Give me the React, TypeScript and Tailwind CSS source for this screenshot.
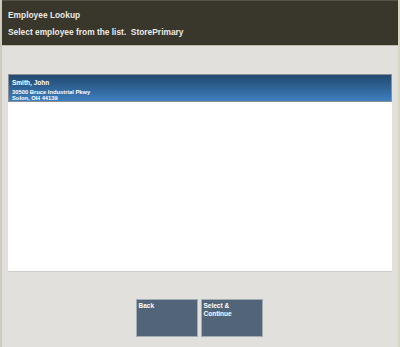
import React from "react";

export default function App() {
  return (
    <div
      className="w-[400px] h-[347px] flex flex-col bg-[#e1e0dc] border-l-2 border-l-[#cfcabd] border-r-2 border-r-[#d9d5c3]"
      style={{ fontFamily: '"Liberation Sans", Arial, sans-serif' }}
    >
      <div className="h-[46px] bg-[#39362c] border-t border-t-[#55524a] border-b border-b-[#bdb9ad] flex flex-col pl-[6px] pt-[9px] text-[#ebe9e3] font-bold text-[8.4px] leading-[10px]">
        <div>Employee Lookup</div>
        <div className="mt-[7px] whitespace-pre">Select employee from the list.  StorePrimary</div>
      </div>
      <div className="flex flex-col pl-[6px] pr-[6px] pt-[28px]">
        <div className="h-[197px] bg-white shadow-[0_1px_0_#cfcdc8] flex flex-col">
          <div className="h-[28px] bg-gradient-to-b from-[#22496f] to-[#3d7fc0] border border-[#8d8e8f] pl-[3px] pt-[4px] text-white font-bold flex flex-col">
            <div className="text-[6.5px] leading-[8px]">Smith, John</div>
            <div className="text-[5.8px] leading-[6px] mt-[2px]">30500 Bruce Industrial Pkwy</div>
            <div className="text-[5.8px] leading-[6px]">Solon, OH 44139</div>
          </div>
        </div>
      </div>
      <div className="flex justify-center gap-[3px] mt-[28px] pr-[2px]">
        <div className="w-[62px] h-[38px] bg-[#526478] border border-[#a3abb3] text-white font-bold text-[6.5px] leading-[8px] pl-[2px] pt-[2px]">
          Back
        </div>
        <div className="w-[62px] h-[38px] bg-[#526478] border border-[#a3abb3] text-white font-bold text-[6.5px] leading-[8px] pl-[2px] pt-[2px]">
          Select &amp;
          <br />
          Continue
        </div>
      </div>
    </div>
  );
}
